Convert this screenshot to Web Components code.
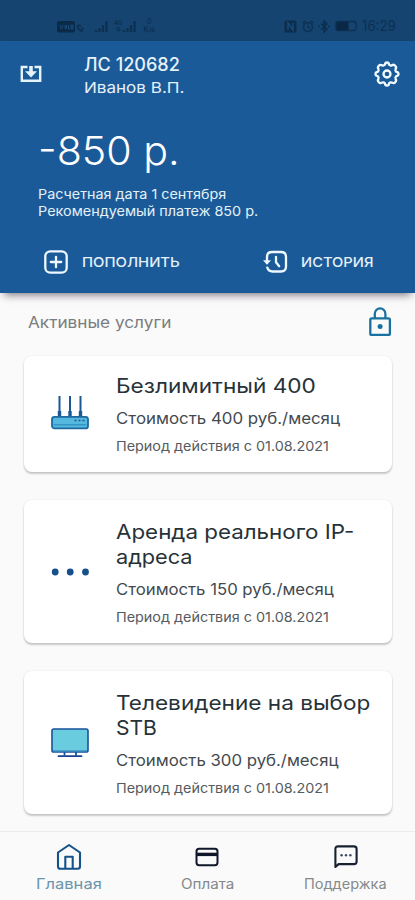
<!DOCTYPE html>
<html lang="ru">
<head>
<meta charset="utf-8">
<title>Личный кабинет</title>
<style>
html,body{margin:0;padding:0}
body{width:415px;height:900px;overflow:hidden;background:#fafafa;font-family:Inter,"Liberation Sans",sans-serif}
</style>
</head>
<body>
<account-app></account-app>
<script>
const define = (name, html, after) => customElements.define(name, class extends HTMLElement {
  connectedCallback() {
    if (this.shadowRoot) return;
    const t = document.createElement('template');
    t.innerHTML = html;
    this.attachShadow({mode: 'open'}).append(t.content.cloneNode(true));
    if (after) after(this, this.shadowRoot);
  }
});

/* One line of text stretched horizontally to the width given in "w". */
define('wide-text', `<style>
:host{display:block;white-space:nowrap;flex:none}
span{display:inline-block;transform-origin:0 50%}
</style><span><slot></slot></span>`, (el, root) => {
  const w = +el.getAttribute('w'), span = root.querySelector('span');
  el.style.width = w + 'px';
  span.style.transform = `scaleX(${w / span.offsetWidth})`;
});

const icons = {
  inbox: [22, 18, `<path d="M7.500 2H1.800v13.800h18.400V2h-5.700" fill="none" stroke="#e4f2fb" stroke-width="2.400"/><path d="M11 1v7" stroke="#e4f2fb" stroke-width="3.600"/><path d="M5 6.300h12L11 12.600z" fill="#e4f2fb"/>`],
  gear: [26, 26, `<g fill="none" stroke="#f0faff" stroke-width="2.300" stroke-linejoin="round"><path d="M10.9 3.8 Q11.2 1.5 13 1.5 T15.1 3.8 Q16.2 4.9 18 4.3 Q20 3 21.2 4.8 Q22.8 6.2 21.6 8 Q21 9.8 22.3 10.9 Q24.5 11.2 24.5 13 T22.3 15.1 Q21 16.2 21.6 18 Q22.8 19.8 21.2 21.2 Q19.9 22.8 18 21.6 Q16.2 21 15.1 22.3 Q14.8 24.5 13 24.5 T10.9 22.3 Q9.8 21 8 21.6 Q6.1 22.8 4.8 21.2 Q3.2 19.8 4.4 18 Q5 16.2 3.7 15.1 Q1.5 14.8 1.5 13 T3.7 10.9 Q5 9.8 4.4 8 Q3.2 6.2 4.8 4.8 Q6.1 3.2 8 4.3 Q9.8 4.9 10.9 3.8Z"/><circle cx="13" cy="13" r="3.5"/></g>`],
  plus: [24, 24, `<g fill="none" stroke="#eef8fd" stroke-width="2.300" stroke-linecap="round"><rect x="1.3" y="1.3" width="21.4" height="21.4" rx="5"/><path d="M12 6.800v10.400M6.800 12h10.400"/></g>`],
  history: [25, 24, `<g fill="none" stroke="#eef8fd" stroke-width="2.300" stroke-linecap="round" stroke-linejoin="round"><path d="M4 10V7q0-5 5-5h9q5 0 5 5v9.500q0 5-5 5H9.500q-4 0-5.200-3.800"/><path d="M13 7v5.200l3.200 4"/></g><path d="M0 10.300h8L4 14.800z" fill="#eef8fd"/>`],
  lock: [24, 30, `<g fill="none" stroke="#19719f" stroke-width="2.300"><rect x="2.300" y="11.300" width="19.600" height="16.600" rx="1.500"/><path d="M6.800 11V6.700a5.300 5.300 0 0 1 10.600 0V11"/></g><circle cx="12.100" cy="19.500" r="2.500" fill="#19719f"/>`],
  router: [38, 36, `<g stroke="#1b5893" stroke-width="2"><path d="M8.500 0v20M19 0v20M29.500 0v20"/><path d="M8.500 15v5M19 15v5M29.500 15v5" stroke-width="3.400"/></g><rect x="1" y="20.800" width="36" height="11.600" rx="2.500" fill="#55b9df" stroke="#1c689f" stroke-width="1.800"/><path d="M2.500 28.800h33" stroke="#3496c5" stroke-width="1.600"/><path d="M23.500 24.500h2M27.500 24.500h2M31.500 24.500h2" stroke="#1b5893" stroke-width="1.600"/>`],
  dots: [38, 8, `<g fill="#154f8c"><circle cx="4.200" cy="4" r="3.400"/><circle cx="19.200" cy="4" r="3.400"/><circle cx="34.500" cy="4" r="3.400"/></g>`],
  tv: [38, 30, `<path d="M13.500 23.500v4M25 23.500v4" stroke="#19549a" stroke-width="1.800"/><rect x="1" y="1" width="36" height="23" rx="1.800" fill="#6accdf" stroke="#1a529c" stroke-width="1.600"/><path d="M2 22.800h34" stroke="#3d8fc2" stroke-width="1.200"/><path d="M7.500 28.200h23" stroke="#17418f" stroke-width="1.800" stroke-linecap="round"/>`],
  home: [26, 28, `<g fill="none" stroke="#15528a" stroke-width="2.100" stroke-linejoin="round"><path d="M2 9.500 13 2l11 7.500V23.500q0 2.200-2.200 2.200H4.200Q2 25.700 2 23.500z"/><path d="M9.300 25.500V13.700h7.400v11.800"/></g>`],
  card: [24, 20, `<rect x="1.500" y="1.800" width="21" height="16.400" rx="2.600" fill="none" stroke="#11172b" stroke-width="2"/><path d="M1.500 7.400h21" stroke="#11172b" stroke-width="3.400"/>`],
  chat: [24, 24, `<path d="M1.400 22V4q0-2.600 2.600-2.600h16q2.600 0 2.600 2.600v12.500q0 2.600-2.600 2.600H4.600z" fill="none" stroke="#182033" stroke-width="2.100" stroke-linejoin="round"/><g fill="#3f485c"><circle cx="7.600" cy="10.200" r="1.200"/><circle cx="12" cy="10.200" r="1.200"/><circle cx="16.400" cy="10.200" r="1.200"/></g>`],
  signal: [14, 12, `<path d="M1 12V10M4.500 12V8M8 12V5M11.500 12V1" stroke="#0d2f50" stroke-width="2.200"/>`],
  volte: [27, 13, `<rect x="0" y="1" width="18" height="11.500" rx="2" fill="#0b2a48"/><path d="M3 5l1.500 4L6 5M8 5.500h1.500v3H8zM11.500 5v4h1.500M14 5h2v4h-2zM14 7h2" stroke="#174b79" fill="none"/><path d="M20.500 5q0 5 5.500 6.500M22 4.500l1.800 2M24.500 8l2 1.500" stroke="#0d3054" stroke-width="1.800" fill="none"/>`],
  nfc: [13, 13, `<rect x=".5" y=".5" width="12" height="12" rx="1.500" fill="#0c2d4d"/><path d="M4 10V3l5 7V3" stroke="#174b79" stroke-width="1.400" fill="none"/>`],
  alarm: [12, 13, `<g fill="none" stroke="#0d3054" stroke-width="1.500"><circle cx="6" cy="7" r="4.500"/><path d="M6 4.500V7l2 1.200M.700 3 3.200.900M11.300 3 8.800.900"/></g>`],
  bt: [12, 13, `<path d="M3 3.500l6 5.500-3 3V1l3 3-6 5.500M.300 6.500h1.500M10 6.500h1.500" stroke="#0c2d4d" stroke-width="1.500" fill="none"/>`],
  battery: [23, 12, `<path d="M19 1.500q2.500.500 2.500 4.500t-2.500 4.500H2.500q-1.500 0-1.500-1.500V3q0-1.500 1.500-1.500z" fill="none" stroke="#0d3054" stroke-width="1.300"/><rect x="1.500" y="2" width="12" height="8" fill="#0a2845"/>`]
};
define('ui-icon', `<style>:host{display:block;flex:none}svg{display:block;overflow:visible}</style>`, (el, root) => {
  const [w, h, body] = icons[el.getAttribute('name')];
  const box = document.createElement('div');
  box.innerHTML = `<svg width="${w}" height="${h}" viewBox="0 0 ${w} ${h}">${body}</svg>`;
  root.append(box);
});

define('status-bar', `<style>
:host{display:flex;height:41px;box-sizing:border-box;background:#14446f;color:#0d3054;padding:11px 19px 0 57px;align-items:center}
.net{font-size:6px;line-height:6px;text-align:center;font-weight:600}
.g{margin-left:5px}.s{margin-left:7px;font-size:7px;line-height:8px}
.right{display:flex;align-items:center;gap:4.500px;margin-left:auto}
wide-text{font-size:14px;line-height:16px}
</style>
<ui-icon name="volte"></ui-icon><ui-icon name="signal" style="margin-left:11px"></ui-icon>
<div class="net g">4G<br>⇅</div><ui-icon name="signal"></ui-icon>
<div class="net s">0<br>K/s</div>
<div class="right"><ui-icon name="nfc"></ui-icon><ui-icon name="alarm"></ui-icon><ui-icon name="bt"></ui-icon><ui-icon name="battery"></ui-icon><wide-text w="34">16:29</wide-text></div>`);

define('header-action', `<style>
:host{display:flex;align-items:center;gap:14px;height:26px;color:#e3f0f8;font-weight:500;font-size:13.5px;line-height:26px}
</style><slot name="icon"></slot><slot></slot>`);

define('account-header', `<style>
:host{display:block;position:relative;height:252px;box-sizing:border-box;background:#1b5a98;color:#e4f1f9;padding:11px 15px 0 20px;box-shadow:0 6px 8px -4px rgba(50,35,55,.6)}
.top{display:grid;grid-template-columns:64px 1fr auto;align-items:center}
.top ui-icon{margin-bottom:3px}
.sum{padding-left:18px;margin-top:32px}
.actions{display:flex;justify-content:space-between;margin:29px 26px 0 23.500px}
</style>
<div class="top"><ui-icon name="inbox"></ui-icon>
<div><wide-text w="96" style="font-size:18.300px;line-height:24px;font-weight:500">ЛС 120682</wide-text>
<wide-text w="100" style="font-size:15px;line-height:23px">Иванов В.П.</wide-text></div>
<ui-icon name="gear"></ui-icon></div>
<div class="sum"><wide-text w="142" style="font-size:40px;line-height:40px;font-weight:300;color:#fff">-850 р.</wide-text>
<wide-text w="188" style="font-size:13.500px;line-height:17px;margin-top:15px">Расчетная дата 1 сентября</wide-text>
<wide-text w="220" style="font-size:13.500px;line-height:17px">Рекомендуемый платеж 850 р.</wide-text></div>
<div class="actions">
<header-action><ui-icon slot="icon" name="plus"></ui-icon><wide-text w="98">ПОПОЛНИТЬ</wide-text></header-action>
<header-action style="gap:13px"><ui-icon slot="icon" name="history"></ui-icon><wide-text w="73">ИСТОРИЯ</wide-text></header-action>
</div>`);

define('service-card', `<style>
:host{display:grid;grid-template-columns:92px 1fr;box-sizing:border-box;border-radius:8px;background:#fff;padding:18px 0 0;box-shadow:0 2px 2px rgba(0,0,0,.2),0 0 2px rgba(0,0,0,.1)}
.icon{display:grid;place-items:center;margin-top:-18px}
.title{font-size:20px;line-height:25px;color:#263238}
.cost{font-size:15.800px;line-height:20px;color:#434a4f;margin-top:10px}
.period{font-size:13.500px;line-height:20px;color:#555b60;margin-top:7px}
</style>
<div class="icon"><slot name="icon"></slot></div>
<div><div class="title"><slot name="title"></slot></div><div class="cost"><slot name="cost"></slot></div><div class="period"><slot name="period"></slot></div></div>`);

define('service-list', `<style>
:host{display:block;padding:14px 23px 0 24px}
.head{display:flex;justify-content:space-between;align-items:center;height:30px;padding:0 0 0 4px;font-size:15.500px;line-height:30px;color:#7a7d7f}
.head wide-text{padding-top:2px}
.cards{display:grid;gap:28px;margin-top:19px}
service-card{height:143px;padding-top:19.500px}
service-card:first-child{height:116px;padding-top:18px}
</style>
<div class="head"><wide-text w="143">Активные услуги</wide-text><ui-icon name="lock"></ui-icon></div>
<div class="cards">
<service-card><ui-icon slot="icon" name="router"></ui-icon>
<wide-text slot="title" w="200">Безлимитный 400</wide-text><wide-text slot="cost" w="224">Стоимость 400 руб./месяц</wide-text><wide-text slot="period" w="213">Период действия с 01.08.2021</wide-text></service-card>
<service-card><ui-icon slot="icon" name="dots"></ui-icon>
<wide-text slot="title" w="238">Аренда реального IP-</wide-text><wide-text slot="title" w="77">адреса</wide-text><wide-text slot="cost" w="218">Стоимость 150 руб./месяц</wide-text><wide-text slot="period" w="213">Период действия с 01.08.2021</wide-text></service-card>
<service-card><ui-icon slot="icon" name="tv"></ui-icon>
<wide-text slot="title" w="254">Телевидение на выбор</wide-text><wide-text slot="title" w="41">STB</wide-text><wide-text slot="cost" w="223">Стоимость 300 руб./месяц</wide-text><wide-text slot="period" w="213">Период действия с 01.08.2021</wide-text></service-card>
</div>`);

define('nav-item', `<style>
:host{display:grid;justify-items:center;grid-template-rows:28px 22px;align-items:center;row-gap:2px;font-size:14px;line-height:22px;color:#85898c}
:host([active]){color:#6c94ab;font-size:14.500px}
</style><slot name="icon"></slot><slot></slot>`);

define('bottom-nav', `<style>
:host{display:grid;grid-template-columns:repeat(3,1fr);height:69px;box-sizing:border-box;border-top:1px solid #ececec;padding-top:11px;background:#fafafa;align-content:start}
</style>
<nav-item active><ui-icon slot="icon" name="home"></ui-icon><wide-text w="66">Главная</wide-text></nav-item>
<nav-item><ui-icon slot="icon" name="card"></ui-icon><wide-text w="53">Оплата</wide-text></nav-item>
<nav-item><ui-icon slot="icon" name="chat"></ui-icon><wide-text w="83">Поддержка</wide-text></nav-item>`);

define('account-app', `<style>
:host{display:flex;flex-direction:column;width:415px;height:900px;background:#fafafa}
service-list{flex:1}
</style><status-bar></status-bar><account-header></account-header><service-list></service-list><bottom-nav></bottom-nav>`);
</script>
</body>
</html>
